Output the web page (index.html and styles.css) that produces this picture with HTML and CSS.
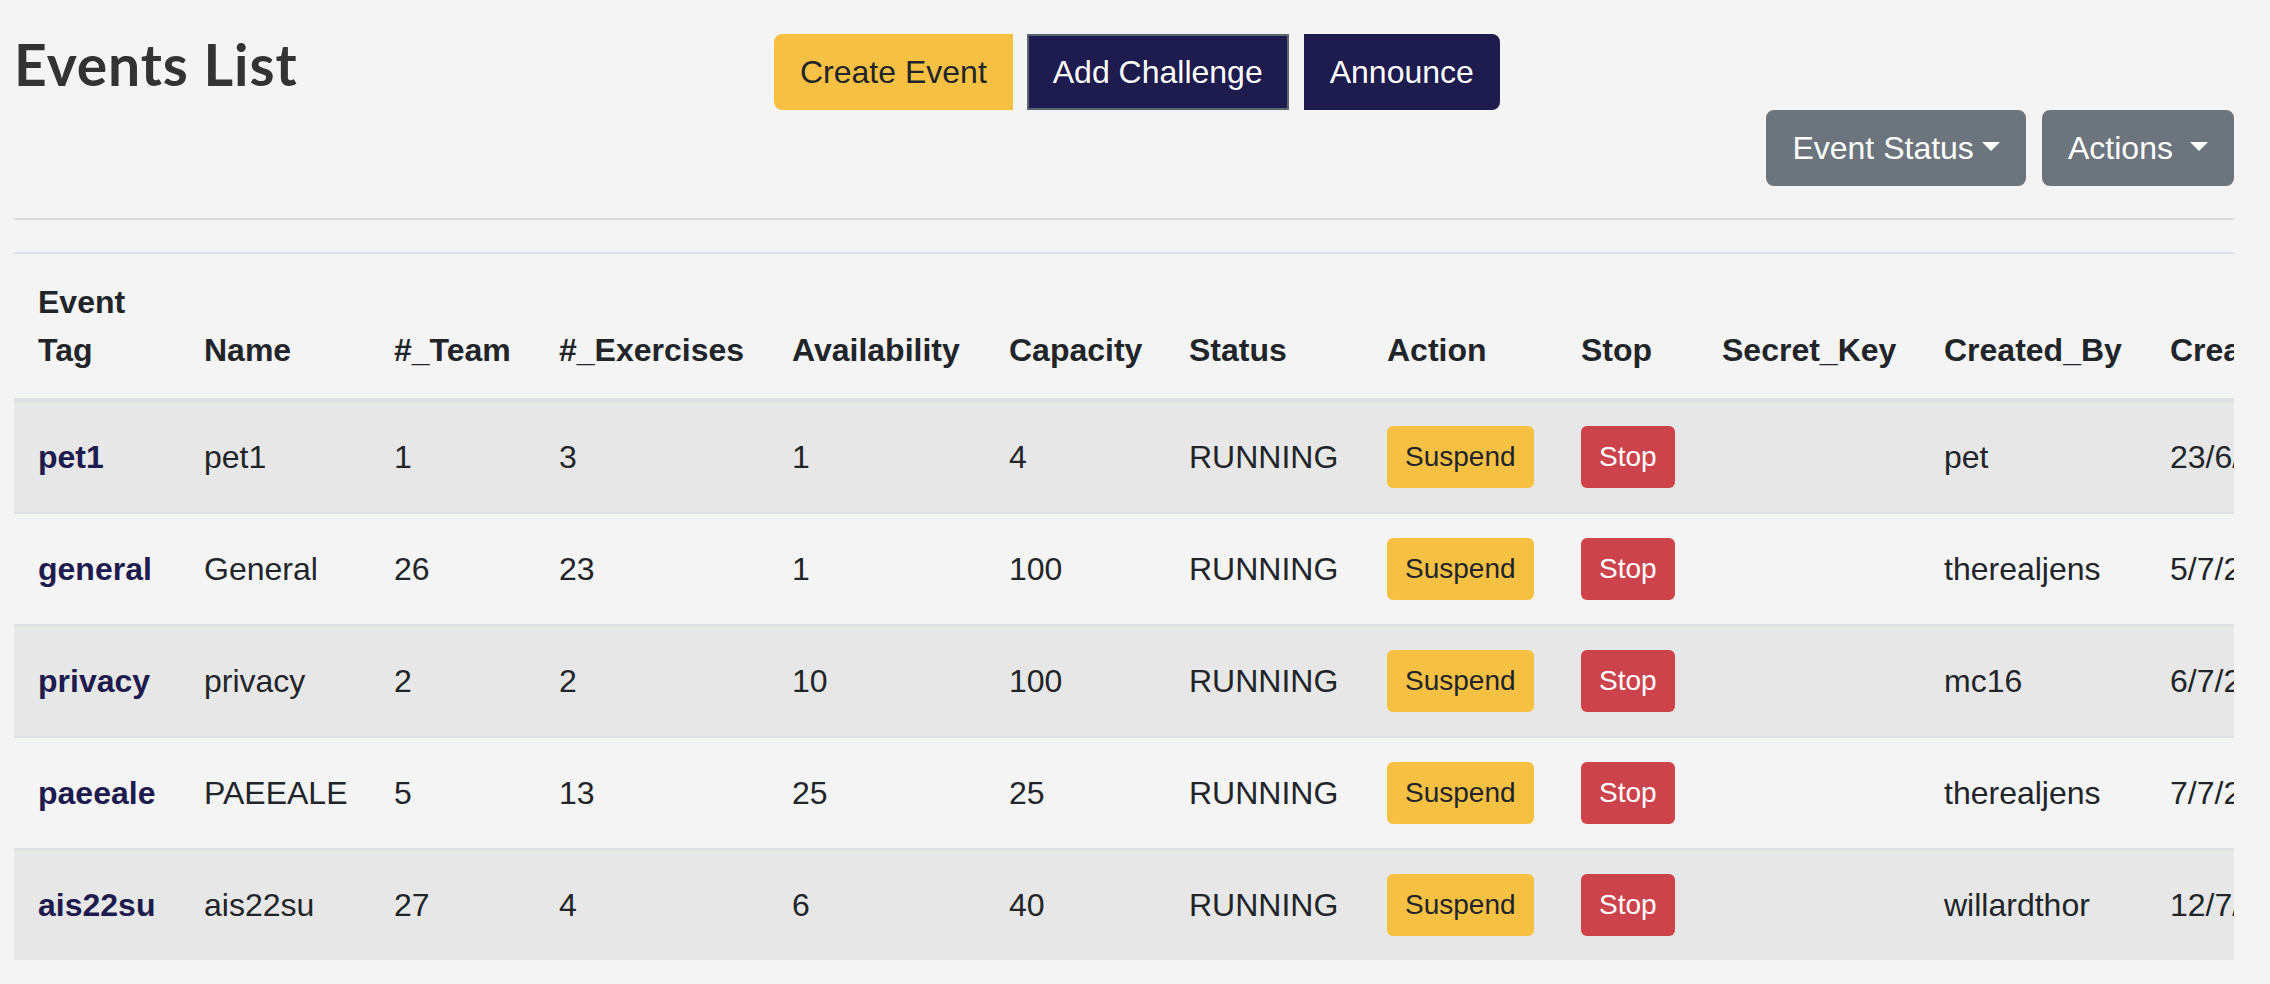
FILE: index.html
```html
<!DOCTYPE html>
<html lang="en">
<head>
<meta charset="utf-8">
<title>Events List</title>
<link rel="stylesheet" href="styles.css">
</head>
<body>
<div class="page">
  <div class="top-row">
    <h2 class="title">Events List</h2>
    <div class="main-actions">
      <button class="btn btn-warning btn-first">Create Event</button>
      <button class="btn btn-navy btn-mid">Add Challenge</button>
      <button class="btn btn-navy btn-last">Announce</button>
    </div>
  </div>
  <div class="filter-row">
    <button class="btn btn-secondary dropdown-toggle">Event Status</button>
    <button class="btn btn-secondary dropdown-toggle">Actions&nbsp;</button>
  </div>
  <hr class="divider">
  <div class="table-wrap">
    <table class="events-table">
      <colgroup>
        <col class="c-tag"><col class="c-name"><col class="c-team"><col class="c-ex"><col class="c-avail"><col class="c-cap"><col class="c-status"><col class="c-action"><col class="c-stop"><col class="c-key"><col class="c-by"><col class="c-at">
      </colgroup>
      <thead>
        <tr>
          <th class="wrap">Event Tag</th>
          <th>Name</th>
          <th>#_Team</th>
          <th>#_Exercises</th>
          <th>Availability</th>
          <th>Capacity</th>
          <th>Status</th>
          <th>Action</th>
          <th>Stop</th>
          <th>Secret_Key</th>
          <th>Created_By</th>
          <th>Created_At</th>
        </tr>
      </thead>
      <tbody>
        <tr>
          <td><a class="tag-link" href="#">pet1</a></td>
          <td>pet1</td><td>1</td><td>3</td><td>1</td><td>4</td><td>RUNNING</td>
          <td><button class="btn-sm btn-warning">Suspend</button></td>
          <td><button class="btn-sm btn-danger">Stop</button></td>
          <td></td><td>pet</td><td>23/6/2022</td>
        </tr>
        <tr>
          <td><a class="tag-link" href="#">general</a></td>
          <td>General</td><td>26</td><td>23</td><td>1</td><td>100</td><td>RUNNING</td>
          <td><button class="btn-sm btn-warning">Suspend</button></td>
          <td><button class="btn-sm btn-danger">Stop</button></td>
          <td></td><td>therealjens</td><td>5/7/2022</td>
        </tr>
        <tr>
          <td><a class="tag-link" href="#">privacy</a></td>
          <td>privacy</td><td>2</td><td>2</td><td>10</td><td>100</td><td>RUNNING</td>
          <td><button class="btn-sm btn-warning">Suspend</button></td>
          <td><button class="btn-sm btn-danger">Stop</button></td>
          <td></td><td>mc16</td><td>6/7/2022</td>
        </tr>
        <tr>
          <td><a class="tag-link" href="#">paeeale</a></td>
          <td>PAEEALE</td><td>5</td><td>13</td><td>25</td><td>25</td><td>RUNNING</td>
          <td><button class="btn-sm btn-warning">Suspend</button></td>
          <td><button class="btn-sm btn-danger">Stop</button></td>
          <td></td><td>therealjens</td><td>7/7/2022</td>
        </tr>
        <tr>
          <td><a class="tag-link" href="#">ais22su</a></td>
          <td>ais22su</td><td>27</td><td>4</td><td>6</td><td>40</td><td>RUNNING</td>
          <td><button class="btn-sm btn-warning">Suspend</button></td>
          <td><button class="btn-sm btn-danger">Stop</button></td>
          <td></td><td>willardthor</td><td>12/7/2022</td>
        </tr>
      </tbody>
    </table>
  </div>
</div>
</body>
</html>
```

FILE: styles.css
```css
* { box-sizing: border-box; }

body {
  margin: 0;
  background: #f4f4f4;
  font-family: "Liberation Sans", Arial, sans-serif;
  color: #212529;
}

.page {
  padding: 0 36px 0 14px;
}

.top-row {
  display: flex;
  align-items: flex-start;
  padding-top: 34px;
  height: 110px;
}

.title {
  width: 760px;
  margin: -4px 0 0 0;
  font-family: Lato, "Open Sans", sans-serif;
  font-weight: 700;
  font-size: 57px;
  line-height: 68px;
  color: #333333;
  letter-spacing: 0.9px;
}

.main-actions {
  display: flex;
}

.btn {
  font-family: "Liberation Sans", Arial, sans-serif;
  font-size: 32px;
  line-height: 48px;
  padding: 12px 24px;
  border: 2px solid transparent;
  border-radius: 8px;
  cursor: pointer;
  white-space: nowrap;
}

.btn-warning {
  background: #f6c142;
  border-color: #f6c142;
  color: #212529;
}

.btn-navy {
  background: #1e1b4e;
  border-color: #1e1b4e;
  color: #ffffff;
}

.btn-secondary {
  background: #6c757d;
  border-color: #6c757d;
  color: #ffffff;
}

.btn-danger {
  background: #cc434b;
  border-color: #cc434b;
  color: #ffffff;
}

.btn-first {
  margin-right: 14px;
  border-top-right-radius: 0;
  border-bottom-right-radius: 0;
}

.btn-mid {
  margin-right: 15px;
  border-radius: 0;
  border-color: #5d6472;
}

.btn-last {
  border-top-left-radius: 0;
  border-bottom-left-radius: 0;
}

.dropdown-toggle::after {
  content: "";
  display: inline-block;
  margin-left: 0.255em;
  vertical-align: 0.255em;
  border-top: 0.3em solid;
  border-right: 0.3em solid transparent;
  border-left: 0.3em solid transparent;
  border-bottom: 0;
}

.filter-row {
  display: flex;
  justify-content: flex-end;
  gap: 16px;
  height: 76px;
}

.divider {
  margin: 32px 0;
  border: 0;
  border-top: 2px solid rgba(0, 0, 0, 0.1);
  height: 0;
}

.table-wrap {
  width: 100%;
  overflow: hidden;
}

.events-table {
  border-collapse: collapse;
  table-layout: fixed;
  width: 2432px;
  font-size: 32px;
  line-height: 48px;
  color: #212529;
}

.c-tag { width: 166px; }
.c-name { width: 190px; }
.c-team { width: 165px; }
.c-ex { width: 233px; }
.c-avail { width: 217px; }
.c-cap { width: 180px; }
.c-status { width: 198px; }
.c-action { width: 194px; }
.c-stop { width: 141px; }
.c-key { width: 222px; }
.c-by { width: 226px; }
.c-at { width: 300px; }

.events-table th,
.events-table td {
  padding: 24px;
  text-align: left;
  border-top: 2px solid #dee2e6;
  white-space: nowrap;
}

.events-table th {
  font-weight: 700;
  vertical-align: bottom;
  border-bottom: 4px solid #dee2e6;
}

.events-table th.wrap {
  white-space: normal;
}

.events-table td {
  vertical-align: middle;
}

.events-table tbody tr:nth-of-type(odd) {
  background: rgba(0, 0, 0, 0.05);
}

.tag-link {
  color: #1e1b4e;
  font-weight: 700;
  text-decoration: none;
}

.btn-sm {
  font-family: "Liberation Sans", Arial, sans-serif;
  font-size: 28px;
  line-height: 42px;
  padding: 8px 16px;
  border: 2px solid transparent;
  border-radius: 6px;
  vertical-align: middle;
  cursor: pointer;
}
```
